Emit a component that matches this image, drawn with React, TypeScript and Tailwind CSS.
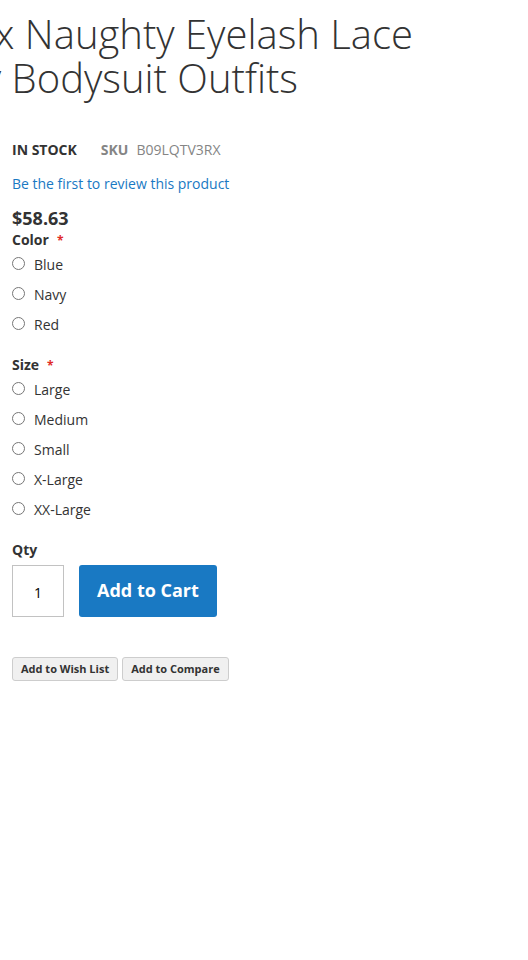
const Options = ({ title, name, items }: { title: string; name: string; items: string[] }) => (
  <fieldset className="mb-2.5">
    <legend className="block h-5 font-bold leading-5">
      {title}
      <span className="ml-2 text-xs text-[#e02b27]">*</span>
    </legend>
    <div className="pt-[5px]">
      {items.map((item) => (
        <label key={item} className="mb-2.5 flex h-5 items-start gap-[9px] leading-5">
          <input type="radio" name={name} value={item} className="m-0 mt-[2px] h-[13px] w-[13px]" />
          <span>{item}</span>
        </label>
      ))}
    </div>
  </fieldset>
);

export default function App() {
  return (
    <main className="overflow-hidden bg-white px-3 pt-3 font-['Open_Sans',sans-serif] text-sm text-[#333]">
      <h1 className="text-[40px] leading-11 font-light whitespace-nowrap">
        <span className="flex w-[401px] justify-end">x Naughty Eyelash Lace</span>
        <span className="flex w-[286px] justify-end">y Bodysuit Outfits</span>
      </h1>

      <div className="mt-10 flex gap-6 leading-5">
        <span className="font-bold uppercase">In stock</span>
        <span className="flex gap-2 text-[#858585]">
          <strong>SKU</strong>
          <span>B09LQTV3RX</span>
        </span>
      </div>
      <a href="#reviews" className="mt-3.5 block w-fit leading-5 text-[#1979c3]">
        Be the first to review this product
      </a>
      <div className="mt-3.5 text-lg leading-5 font-bold">$58.63</div>

      <form className="mt-0.5" onSubmit={(e) => e.preventDefault()}>
        <Options title="Color" name="color" items={["Blue", "Navy", "Red"]} />
        <Options title="Size" name="size" items={["Large", "Medium", "Small", "X-Large", "XX-Large"]} />
        <label htmlFor="qty" className="block leading-5 font-bold">
          Qty
        </label>
        <div className="mt-[5px] flex gap-[15px]">
          <input
            id="qty"
            type="text"
            inputMode="numeric"
            defaultValue="1"
            className="h-[52px] w-[52px] border border-[#c2c2c2] bg-white pt-0.5 text-center text-sm text-black"
          />
          <button type="submit" className="h-[52px] rounded-[3px] bg-[#1979c3] px-[18px] pb-0.5 text-lg font-bold text-white">
            Add to Cart
          </button>
        </div>
      </form>

      <div className="mt-10 flex gap-1 text-[11px] leading-4 font-bold">
        <button type="button" className="h-6 rounded-[3px] border border-[#cdcdcd] bg-[#f0f0f0] px-2">
          Add to Wish List
        </button>
        <button type="button" className="h-6 rounded-[3px] border border-[#cdcdcd] bg-[#f0f0f0] px-2">
          Add to Compare
        </button>
      </div>
    </main>
  );
}
